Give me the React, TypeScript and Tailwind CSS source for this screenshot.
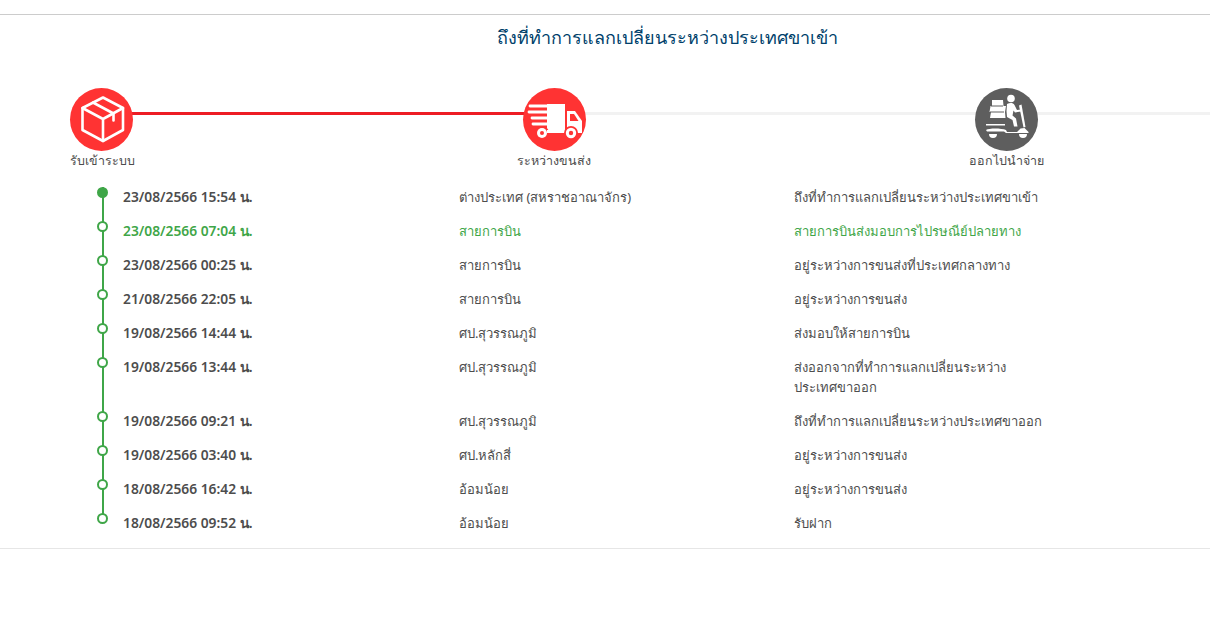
const rows = [
  { time: '23/08/2566 15:54 น.', place: 'ต่างประเทศ (สหราชอาณาจักร)', status: 'ถึงที่ทำการแลกเปลี่ยนระหว่างประเทศขาเข้า', first: true },
  { time: '23/08/2566 07:04 น.', place: 'สายการบิน', status: 'สายการบินส่งมอบการไปรษณีย์ปลายทาง', green: true },
  { time: '23/08/2566 00:25 น.', place: 'สายการบิน', status: 'อยู่ระหว่างการขนส่งที่ประเทศกลางทาง' },
  { time: '21/08/2566 22:05 น.', place: 'สายการบิน', status: 'อยู่ระหว่างการขนส่ง' },
  { time: '19/08/2566 14:44 น.', place: 'ศป.สุวรรณภูมิ', status: 'ส่งมอบให้สายการบิน' },
  { time: '19/08/2566 13:44 น.', place: 'ศป.สุวรรณภูมิ', status: 'ส่งออกจากที่ทำการแลกเปลี่ยนระหว่างประเทศขาออก', tall: true },
  { time: '19/08/2566 09:21 น.', place: 'ศป.สุวรรณภูมิ', status: 'ถึงที่ทำการแลกเปลี่ยนระหว่างประเทศขาออก' },
  { time: '19/08/2566 03:40 น.', place: 'ศป.หลักสี่', status: 'อยู่ระหว่างการขนส่ง' },
  { time: '18/08/2566 16:42 น.', place: 'อ้อมน้อย', status: 'อยู่ระหว่างการขนส่ง' },
  { time: '18/08/2566 09:52 น.', place: 'อ้อมน้อย', status: 'รับฝาก', last: true },
]

function BoxIcon() {
  return (
    <svg viewBox="0 0 63 63" className="h-[63px] w-[63px]" fill="none" stroke="white" strokeWidth="2.6" strokeLinejoin="round" strokeLinecap="round">
      <path d="M33 9.5 53 20v22L33 53 12.5 42V20Z" />
      <path d="M12.5 20 33 31l20-11M33 31v22" />
      <path d="M23 14.5 43.5 25.5v7" />
    </svg>
  )
}

function TruckIcon() {
  return (
    <svg viewBox="0 0 63 63" className="h-[63px] w-[63px]" fill="white">
      <path d="M24 16h18v29H24z" />
      <path d="M44 23h8l7 10v12H44z" />
      <path d="M47 26h4l4.500 7H47z" fill="#ff3333" />
      <g stroke="white" strokeWidth="2.800" strokeLinecap="round">
        <path d="M7 18h19M6 24h20M9 30h17M10 36h16" />
      </g>
      <circle cx="19" cy="45" r="7" fill="#ff3333" />
      <circle cx="19" cy="45" r="5" />
      <circle cx="19" cy="45" r="2" fill="#ff3333" />
      <circle cx="48" cy="45" r="7" fill="#ff3333" />
      <circle cx="48" cy="45" r="5.200" />
      <circle cx="48" cy="45" r="2.200" fill="#ff3333" />
      <path d="M24 42h6v3h-6z" />
    </svg>
  )
}

function ScooterIcon() {
  return (
    <svg viewBox="0 0 63 63" className="h-[63px] w-[63px]" fill="white">
      <circle cx="36" cy="10.500" r="3.800" />
      <path d="M17 12h11l.5 6H31l-1 6 .5 6H15l1-6h-1.500l1-6H17z" />
      <path d="M16 18h12M15 24h14" stroke="#5e5e5e" strokeWidth="1" />
      <path d="M32 16c3-1.500 6-1.500 7.500 1l2.500 5 4-.5v2l-6 1-1.500-2-1 5 3.500 3 1.500 8H39l-1.500-6.500L32 29l-.5-6z" />
      <path d="M44 17.500l2.500-1 4 22.500-2 .5z" />
      <path d="M11 36h19v1.500H11z" />
      <path d="M11 42c3-2 15-2 20 0l1 2h10l3.500-3.500 4-.5 4 4v1H31l-2-1.500H12z" />
      <path d="M14 46h8a4 4 0 0 1-8 0zM44 46h8a4 4 0 0 1-8 0z" />
    </svg>
  )
}

export default function App() {
  return (
    <div className="h-[622px] w-[1210px] overflow-hidden bg-white pt-[14px] font-['Noto_Sans','Liberation_Sans',sans-serif] text-[13px] text-[#4d4d4d]">
      <div className="border-t border-[#ccc] pt-[7px] text-center">
        <h1 className="ml-[124px] h-[30px] text-[18px] font-medium leading-[30px] text-[#003f6b]">ถึงที่ทำการแลกเปลี่ยนระหว่างประเทศขาเข้า</h1>
      </div>
      <div className="relative mt-[36px] flex h-[99px] justify-between pl-[70px] pr-[172px]">
        <div className="absolute left-[100px] right-0 top-[24px] h-[3px] bg-[#f2f2f2]" />
        <div className="absolute left-[100px] top-[24px] h-[3px] w-[450px] bg-[#ed1c24]" />
        <div className="relative w-[63px]">
          <div className="h-[63px] w-[63px] rounded-full bg-[#ff3333]"><BoxIcon /></div>
          <div className="mt-[1px] whitespace-nowrap text-[12.5px]">รับเข้าระบบ</div>
        </div>
        <div className="relative flex w-[63px] flex-col items-center">
          <div className="h-[63px] w-[63px] rounded-full bg-[#ff3333]"><TruckIcon /></div>
          <div className="mt-[1px] whitespace-nowrap text-[12.5px]">ระหว่างขนส่ง</div>
        </div>
        <div className="relative flex w-[63px] flex-col items-center">
          <div className="h-[63px] w-[63px] rounded-full bg-[#5e5e5e]"><ScooterIcon /></div>
          <div className="mt-[1px] whitespace-nowrap text-[12.5px]">ออกไปนำจ่าย</div>
        </div>
      </div>
      <div className="border-b border-[#e6e6e6] pb-[1px] pl-[97px]">
        {rows.map((r) => (
          <div key={r.time} className={`flex leading-[20px] ${r.tall ? 'h-[54px]' : 'h-[34px]'} ${r.green ? 'text-[#3fa648]' : ''}`}>
            <div className="relative w-[26px] shrink-0">
              {!r.last && <div className="absolute left-[4.5px] top-0 h-[calc(100%+4px)] w-[2px] bg-[#3fa648]" />}
              <div className={`absolute left-0 top-0 h-[11px] w-[11px] rounded-full border-2 border-[#3fa648] ${r.first ? 'bg-[#3fa648]' : 'bg-white'}`} />
            </div>
            <div className="w-[336px] shrink-0 text-[13.8px] font-semibold">{r.time}</div>
            <div className="w-[335px] shrink-0">{r.place}</div>
            <div className="w-[250px] shrink-0">{r.status}</div>
          </div>
        ))}
      </div>
    </div>
  )
}
